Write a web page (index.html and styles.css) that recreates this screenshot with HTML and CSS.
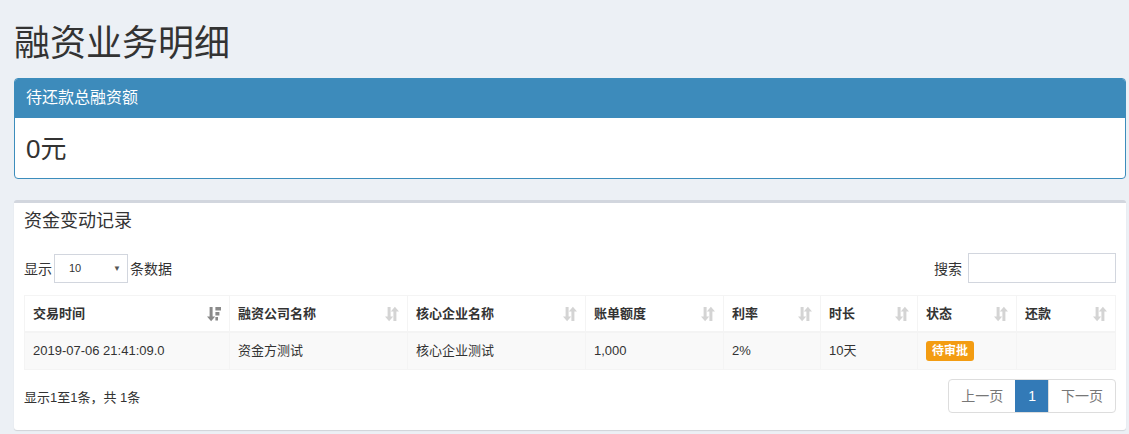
FILE: index.html
```html
<!DOCTYPE html>
<html lang="zh-CN">
<head>
    <meta charset="UTF-8">
    <title>融资业务明细</title>
    <link rel="stylesheet" href="styles.css">
</head>
<body>
    <div class="content">
        <!-- Page title -->
        <h1 class="page-title">融资业务明细</h1>

        <!-- Outstanding total -->
        <div class="panel">
            <div class="panel-heading">待还款总融资额</div>
            <div class="panel-body">0元</div>
        </div>

        <!-- Fund change records -->
        <div class="box">
            <div class="box-header">资金变动记录</div>
            <div class="box-body">
                <div class="table-tools">
                    <div class="length">
                        显示
                        <div class="select">
                            <span>10</span>
                            <span class="caret">&#9660;</span>
                        </div>
                        条数据
                    </div>
                    <div class="search">
                        搜索
                        <div class="search-input"></div>
                    </div>
                </div>

                <table class="records">
                    <colgroup>
                        <col style="width:205px">
                        <col style="width:178px">
                        <col style="width:178px">
                        <col style="width:138px">
                        <col style="width:97px">
                        <col style="width:97px">
                        <col style="width:99px">
                        <col style="width:99px">
                    </colgroup>
                    <thead>
                        <tr>
                            <th class="sorted">交易时间
                                <svg class="sort" viewBox="0 0 14 16"><path d="M2.6 1h3v9.4h2.6l-4.1 4.8L0 10.4h2.6z"/><path d="M8.4 1h5.6v3.4H8.4zM8.4 6h4v3.4h-4zM8.4 11h2.6v3.4H8.4z"/></svg>
                            </th>
                            <th>融资公司名称
                                <svg class="sort" viewBox="0 0 14 16"><path d="M2.6 1h3v9.4h2.6l-4.1 4.8L0 10.4h2.6z"/><path d="M8.4 15V5.6H5.8l4.1-4.8L14 5.6h-2.6V15z"/></svg>
                            </th>
                            <th>核心企业名称
                                <svg class="sort" viewBox="0 0 14 16"><path d="M2.6 1h3v9.4h2.6l-4.1 4.8L0 10.4h2.6z"/><path d="M8.4 15V5.6H5.8l4.1-4.8L14 5.6h-2.6V15z"/></svg>
                            </th>
                            <th>账单额度
                                <svg class="sort" viewBox="0 0 14 16"><path d="M2.6 1h3v9.4h2.6l-4.1 4.8L0 10.4h2.6z"/><path d="M8.4 15V5.6H5.8l4.1-4.8L14 5.6h-2.6V15z"/></svg>
                            </th>
                            <th>利率
                                <svg class="sort" viewBox="0 0 14 16"><path d="M2.6 1h3v9.4h2.6l-4.1 4.8L0 10.4h2.6z"/><path d="M8.4 15V5.6H5.8l4.1-4.8L14 5.6h-2.6V15z"/></svg>
                            </th>
                            <th>时长
                                <svg class="sort" viewBox="0 0 14 16"><path d="M2.6 1h3v9.4h2.6l-4.1 4.8L0 10.4h2.6z"/><path d="M8.4 15V5.6H5.8l4.1-4.8L14 5.6h-2.6V15z"/></svg>
                            </th>
                            <th>状态
                                <svg class="sort" viewBox="0 0 14 16"><path d="M2.6 1h3v9.4h2.6l-4.1 4.8L0 10.4h2.6z"/><path d="M8.4 15V5.6H5.8l4.1-4.8L14 5.6h-2.6V15z"/></svg>
                            </th>
                            <th>还款
                                <svg class="sort" viewBox="0 0 14 16"><path d="M2.6 1h3v9.4h2.6l-4.1 4.8L0 10.4h2.6z"/><path d="M8.4 15V5.6H5.8l4.1-4.8L14 5.6h-2.6V15z"/></svg>
                            </th>
                        </tr>
                    </thead>
                    <tbody>
                        <tr>
                            <td>2019-07-06 21:41:09.0</td>
                            <td>资金方测试</td>
                            <td>核心企业测试</td>
                            <td>1,000</td>
                            <td>2%</td>
                            <td>10天</td>
                            <td><span class="label">待审批</span></td>
                            <td></td>
                        </tr>
                    </tbody>
                </table>

                <div class="table-footer">
                    <div class="info">显示1至1条，共 1条</div>
                    <div class="pagination">
                        <span class="page">上一页</span>
                        <span class="page active">1</span>
                        <span class="page">下一页</span>
                    </div>
                </div>
            </div>
        </div>
    </div>
</body>
</html>
```

FILE: styles.css
```css
/* General page */
body {
    margin: 0;
    background: #ecf0f5;
    font-family: 'Liberation Sans', 'Noto Sans CJK SC', sans-serif;
    color: #333;
    font-size: 14px;
}

.content {
    padding: 22px 3px 0 14px;
}

.page-title {
    margin: 0 0 12px 0;
    font-size: 36px;
    font-weight: normal;
    line-height: 44px;
    color: #333;
}

/* Top panel */
.panel {
    background: #fff;
    border: 1px solid #3c8dbc;
    border-radius: 4px;
    overflow: hidden;
    margin-bottom: 21px;
}

.panel-heading {
    background: #3d8bbb;
    color: #fff;
    font-size: 16px;
    line-height: 20px;
    padding: 9px 11px 10px;
}

.panel-body {
    font-size: 26px;
    line-height: 30px;
    padding: 16px 11px 14px;
}

/* Records box */
.box {
    background: #fff;
    border-top: 3px solid #d2d6de;
    border-radius: 3px;
    box-shadow: 0 1px 1px rgba(0, 0, 0, 0.12);
    margin-bottom: 4px;
}

.box-header {
    font-size: 18px;
    line-height: 22px;
    padding: 7px 10px 0;
}

.box-body {
    padding: 21px 10px 17px;
}

.table-tools {
    display: flex;
    justify-content: space-between;
    align-items: center;
    margin-bottom: 12px;
}

.length,
.search {
    display: flex;
    align-items: center;
    gap: 2px;
}

.search {
    gap: 6px;
}

.select {
    width: 74px;
    height: 29px;
    border: 1px solid #d2d6de;
    box-sizing: border-box;
    display: flex;
    justify-content: space-between;
    align-items: center;
    padding: 0 6px 0 14px;
    font-size: 11px;
}

.select .caret {
    font-size: 8px;
    color: #555;
}

.search-input {
    width: 148px;
    height: 30px;
    border: 1px solid #d2d6de;
    box-sizing: border-box;
}

/* Table */
.records {
    width: 100%;
    border-collapse: collapse;
    table-layout: fixed;
    border: 1px solid #f4f4f4;
}

.records th,
.records td {
    border: 1px solid #f4f4f4;
    padding: 8px 8px;
    text-align: left;
    line-height: 18px;
    font-size: 13px;
}

.records th {
    position: relative;
    font-weight: bold;
    border-bottom-width: 2px;
    height: 19px;
}

.records td {
    height: 20px;
    background: #f9f9f9;
}

.sort {
    position: absolute;
    right: 8px;
    top: 10px;
    width: 14px;
    height: 16px;
    fill: #d4d4d4;
}

.sorted .sort {
    fill: #8a8a8a;
}

.label {
    display: inline-block;
    background: #f39c12;
    color: #fff;
    font-weight: bold;
    font-size: 12px;
    line-height: 18px;
    padding: 1px 6px;
    border-radius: 3px;
}

.table-footer {
    display: flex;
    justify-content: space-between;
    align-items: center;
    margin-top: 9px;
}

.info {
    font-size: 13px;
}

.pagination {
    display: flex;
    border: 1px solid #ddd;
    border-radius: 4px;
    overflow: hidden;
}

.page {
    padding: 0 12px;
    line-height: 32px;
    color: #777;
    font-size: 14px;
    border-left: 1px solid #ddd;
}

.page:first-child {
    border-left: none;
}

.page.active {
    background: #337ab7;
    color: #fff;
    border-left-color: #337ab7;
    padding: 0 12px;
}
```
